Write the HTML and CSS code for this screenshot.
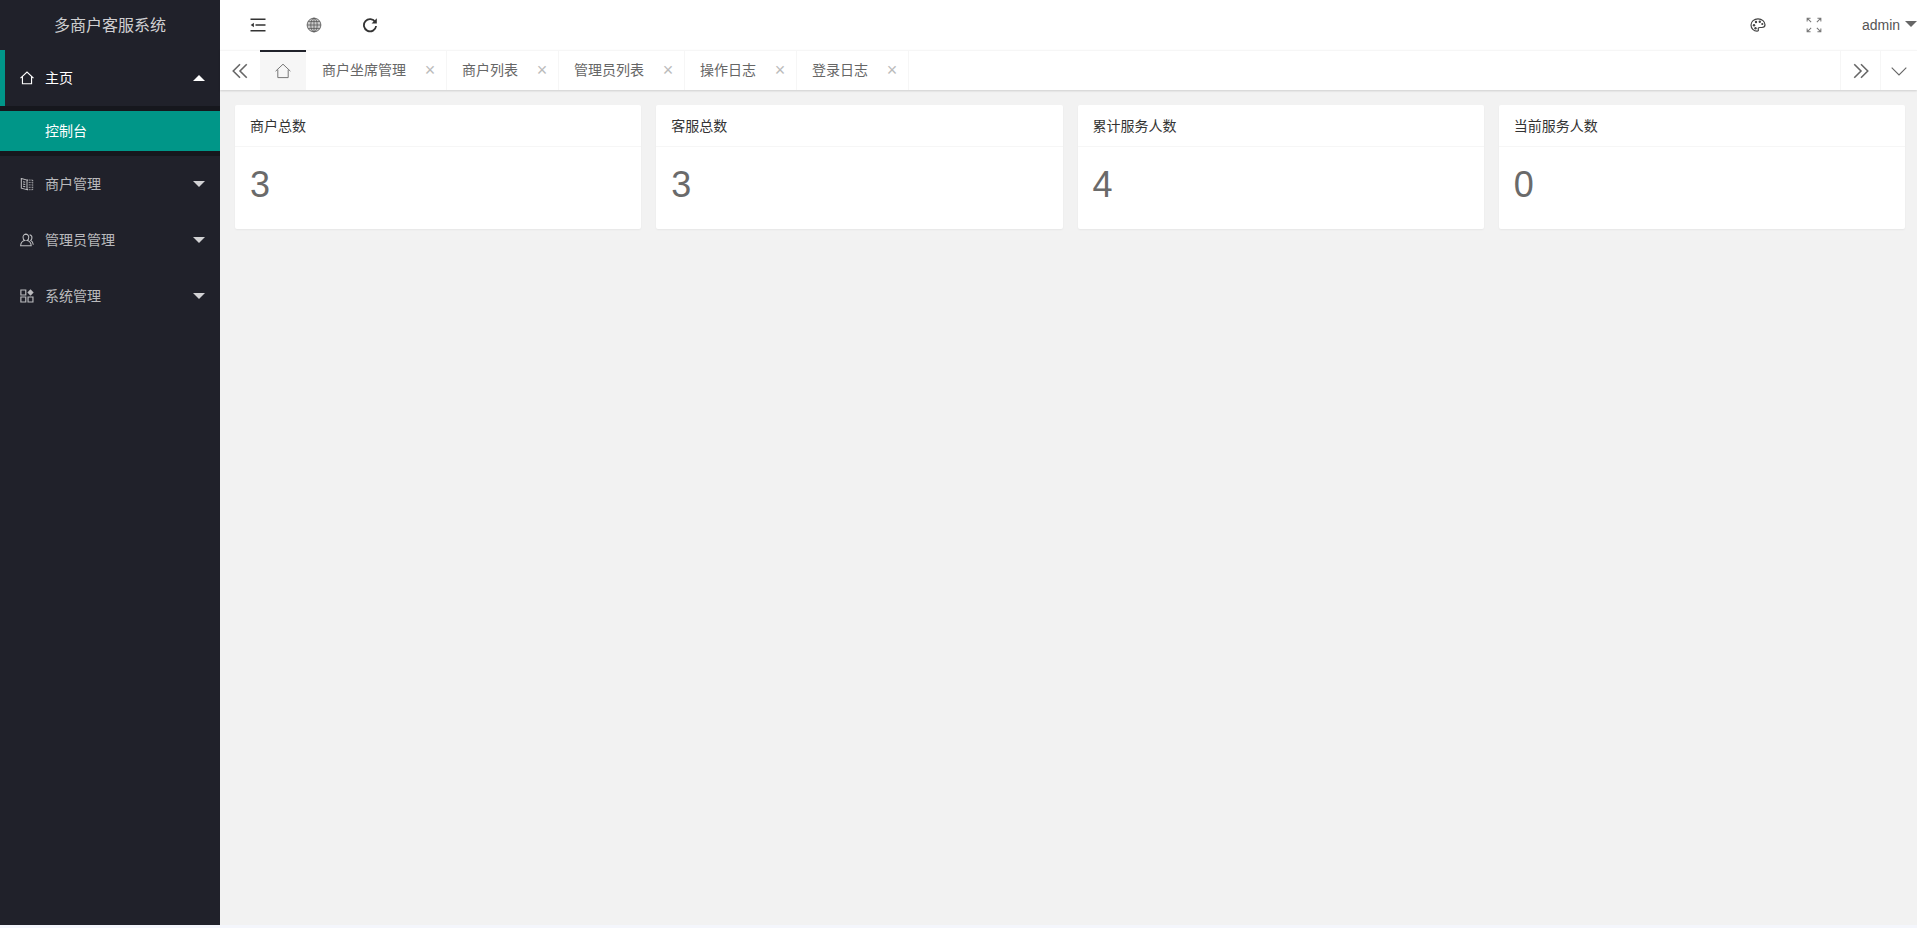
FILE: index.html
```html
<!DOCTYPE html>
<html lang="zh">
<head>
<meta charset="utf-8">
<title>多商户客服系统</title>
<link rel="stylesheet" href="styles.css">
</head>
<body>
<div class="app">
  <aside class="side">
    <div class="logo">多商户客服系统</div>
    <nav class="menu">
      <div class="mi open">
        <svg class="mi-icon" viewBox="0 0 16 16"><path d="M.6 8.200 8 1.200l7.400 7M2.800 6.600v8h10.400v-8" fill="none" stroke="currentColor" stroke-width="1.300"/></svg>
        <span class="mi-text">主页</span><i class="caret up"></i>
      </div>
      <div class="sub"><div class="sub-item">控制台</div></div>
      <div class="mi">
        <svg class="mi-icon" viewBox="0 0 16 16"><path d="M1.500 1.800 8 3.500v11l-6.500-1.700zM3.500 5.500 6 6.100M3.500 8 6 8.600M3.500 10.500l2.500.6" fill="none" stroke="currentColor" stroke-width="1.200"/><path d="M8 3.500h6.500M8 14.500h6.500M14.500 3.500v11M10 6.200h3M10 9h3M10 11.800h3" fill="none" stroke="currentColor" stroke-width="1.100" stroke-dasharray="1.200 .8"/></svg>
        <span class="mi-text">商户管理</span><i class="caret"></i>
      </div>
      <div class="mi">
        <svg class="mi-icon" viewBox="0 0 16 16"><path d="M6.500 1.300a3.500 3.500 0 0 1 3.500 3.800c0 1.600-.8 2.900-1.800 3.500 2.800.7 4.400 2.900 4.600 5.900H.7c.2-3 1.800-5.200 4.600-5.900-1-.6-1.800-1.900-1.800-3.500a3.400 3.400 0 0 1 3-3.800zM11 2c1.900.5 2.900 2.100 2.600 3.900-.1 1-.6 1.900-1.400 2.500 1.600.8 2.700 2.500 3 5" fill="none" stroke="currentColor" stroke-width="1.200"/></svg>
        <span class="mi-text">管理员管理</span><i class="caret"></i>
      </div>
      <div class="mi">
        <svg class="mi-icon" viewBox="0 0 16 16"><path d="M1 1.200h5.600v5.600H1zM1 9.200h5.600v5.600H1zM9.200 9.200h5.600v5.600H9.200z" fill="none" stroke="currentColor" stroke-width="1.300"/><path d="M12 .4 15.600 4 12 7.600 8.400 4z" fill="currentColor"/></svg>
        <span class="mi-text">系统管理</span><i class="caret"></i>
      </div>
    </nav>
  </aside>
  <main class="main">
    <header class="top">
      <div class="top-group">
        <div class="top-btn">
          <svg class="ico" viewBox="0 0 16 16"><path d="M.5 2.200h15M5.500 8h10M.5 13.800h15" fill="none" stroke="#333" stroke-width="1.500"/><path d="M.7 8l3.200-2.200v4.400z" fill="#333"/></svg>
        </div>
        <div class="top-btn">
          <svg class="ico" viewBox="0 0 16 16"><circle cx="8" cy="8" r="7" fill="#ccc"/><g fill="none" stroke="#555" stroke-width=".8"><circle cx="8" cy="8" r="6.900"/><ellipse cx="8" cy="8" rx="3.200" ry="6.900"/><path d="M8 1.100v13.800M1.100 8h13.800M2.200 4.600h11.600M2.200 11.400h11.600"/></g></svg>
        </div>
        <div class="top-btn">
          <svg class="ico" viewBox="0 0 16 16"><path d="M13.300 5.200A6.100 6.100 0 1 0 14.100 9" fill="none" stroke="#333" stroke-width="1.800"/><path d="M14.800 1.300v5.200H9.600z" fill="#333"/></svg>
        </div>
      </div>
      <div class="top-group">
        <div class="top-btn">
          <svg class="ico" viewBox="0 0 16 16"><path d="M8 1.800c-3.900 0-7 2.700-7 6.200 0 3.400 2.800 6.200 6 6.200 1.300 0 1.600-.8 1.300-1.700-.4-1 .1-2 1.300-2h2.300c1.900 0 3.100-1.100 3.100-2.700 0-3.200-3-6-7-6z" fill="none" stroke="#444" stroke-width="1.200"/><circle cx="4" cy="8.200" r="1.200" fill="#444"/><circle cx="6" cy="5" r="1.200" fill="#444"/><circle cx="9.800" cy="4.800" r="1.200" fill="#444"/><circle cx="12.300" cy="7" r="1.100" fill="#444"/><circle cx="5.500" cy="11.300" r="1.200" fill="#444"/></svg>
        </div>
        <div class="top-btn">
          <svg class="ico" viewBox="0 0 14 14"><path d="M1 4V1h3M1.200 1.200 4.500 4.500M13 4V1h-3M12.800 1.200 9.500 4.500M1 10v3h3M1.200 12.800l3.300-3.300M13 10v3h-3M12.800 12.800 9.500 9.500" fill="none" stroke="#777" stroke-width=".9"/></svg>
        </div>
        <div class="user"><span>admin</span><i class="caret dark"></i></div>
      </div>
    </header>
    <div class="tabs">
      <div class="tab-ctl">
        <svg class="chev" viewBox="0 0 16 16"><path d="M8 2 2 8l6 6M14 2 8 8l6 6" fill="none" stroke="#666" stroke-width="1.400"/></svg>
      </div>
      <div class="tab-list">
        <div class="tab home">
          <svg class="home-ico" viewBox="0 0 16 16"><path d="M.6 8.200 8 1.200l7.400 7M2.800 6.600v8h10.400v-8" fill="none" stroke="#777" stroke-width="1"/></svg>
        </div>
        <div class="tab"><span>商户坐席管理</span><i class="close">×</i></div>
        <div class="tab"><span>商户列表</span><i class="close">×</i></div>
        <div class="tab"><span>管理员列表</span><i class="close">×</i></div>
        <div class="tab"><span>操作日志</span><i class="close">×</i></div>
        <div class="tab"><span>登录日志</span><i class="close">×</i></div>
      </div>
      <div class="tab-ctl bordered">
        <svg class="chev" viewBox="0 0 16 16"><path d="M2 2l6 6-6 6M8 2l6 6-6 6" fill="none" stroke="#666" stroke-width="1.400"/></svg>
      </div>
      <div class="tab-ctl bordered narrow">
        <svg class="chev" viewBox="0 0 16 16"><path d="M1.500 5 8 11.500 14.500 5" fill="none" stroke="#666" stroke-width="1"/></svg>
      </div>
    </div>
    <section class="body">
      <article class="card"><h3 class="card-title">商户总数</h3><div class="card-num">3</div></article>
      <article class="card"><h3 class="card-title">客服总数</h3><div class="card-num">3</div></article>
      <article class="card"><h3 class="card-title">累计服务人数</h3><div class="card-num">4</div></article>
      <article class="card"><h3 class="card-title">当前服务人数</h3><div class="card-num">0</div></article>
    </section>
  </main>
</div>
</body>
</html>
```

FILE: styles.css
```css
* { box-sizing: border-box; }
html, body { margin: 0; height: 100%; overflow: hidden; }
body {
  background: #f4f6fc;
  font-family: "Noto Sans CJK SC", "Liberation Sans", sans-serif;
  font-size: 14px;
  color: #666;
}
.app { display: flex; height: 925px; }
.side { width: 220px; flex: none; background: #20212a; color: rgba(255,255,255,.7); }
.logo {
  height: 50px; line-height: 48px; text-align: center;
  font-size: 16px; color: rgba(255,255,255,.8);
}
.mi {
  position: relative; height: 56px; display: flex; align-items: center;
  padding-left: 20px;
}
.mi.open { border-left: 5px solid #009688; padding-left: 15px; color: #fff; }
.mi-icon { width: 14px; height: 14px; margin-right: 11px; flex: none; }
.mi-text { line-height: 20px; margin-bottom: 2px; }
.caret {
  position: absolute; right: 15px; top: 50%; margin-top: -3px;
  width: 0; height: 0;
  border: 6px solid transparent; border-bottom: 0;
  border-top: 6px solid rgba(255,255,255,.8);
}
.caret.up { border-top: 0; border-bottom: 6px solid #fff; }
.sub { background: rgba(0,0,0,.3); padding: 5px 0; }
.sub-item {
  height: 40px; line-height: 38px; padding-left: 45px;
  background: #009688; color: #fff;
}
.main { flex: 1; min-width: 0; display: flex; flex-direction: column; background: #f2f2f2; }
.top {
  height: 50px; flex: none; background: #fff; display: flex;
  justify-content: space-between; padding-left: 10px;
}
.top-group { display: flex; align-items: center; }
.top-btn { width: 56px; height: 50px; display: flex; align-items: center; justify-content: center; }
.ico { width: 16px; height: 16px; }
.user {
  position: relative; width: 75px; padding-left: 20px; color: #555;
  line-height: 50px; height: 50px;
  font-family: "Liberation Sans", sans-serif;
}
.user .caret { right: 0; top: 25px; margin-top: -4px; border-top-color: #666; }
.tabs {
  height: 40px; flex: none; display: flex; background: #fff;
  border-top: 1px solid #f6f6f6;
  box-shadow: 0 1px 2px rgba(0,0,0,.15);
  position: relative;
}
.tab-ctl { width: 40px; flex: none; display: flex; align-items: center; justify-content: center; }
.tab-ctl.bordered { border-left: 1px solid #f6f6f6; }
.tab-ctl.narrow { width: 37px; }
.chev { width: 18px; height: 18px; }
.tab-list { flex: 1; display: flex; min-width: 0; }
.tab {
  display: flex; align-items: center; height: 39px; padding: 0 10px 0 15px;
  border-right: 1px solid #f6f6f6; color: #666; line-height: 20px;
}
.tab span { margin-bottom: 3px; }
.tab.home {
  width: 46px; margin-right: 1px; justify-content: center; padding: 0;
  background: #f6f6f6; border-right: 0; border-top: 2px solid #20222a;
  margin-top: -1px; height: 40px;
}
.home-ico { width: 16px; height: 16px; }
.close {
  margin-left: 18px; margin-bottom: 1px; width: 12px; text-align: center;
  font-style: normal; color: #bbb; font-size: 18px;
  font-family: "Liberation Sans", sans-serif;
}
.body { display: grid; grid-template-columns: repeat(4, 1fr); gap: 15px; padding: 15px 12px 0 15px; align-items: start; }
.card { background: #fff; border-radius: 2px; box-shadow: 0 1px 2px rgba(0,0,0,.05); height: 124px; }
.card-title {
  margin: 0; height: 42px; line-height: 40px; padding: 0 15px;
  font-weight: 400; font-size: 14px; color: #333; border-bottom: 1px solid #f6f6f6;
}
.card-num {
  padding: 0 15px; height: 82px; line-height: 76px;
  font-size: 36px; color: #6a6a6a; font-family: "Liberation Sans", sans-serif;
}
```
